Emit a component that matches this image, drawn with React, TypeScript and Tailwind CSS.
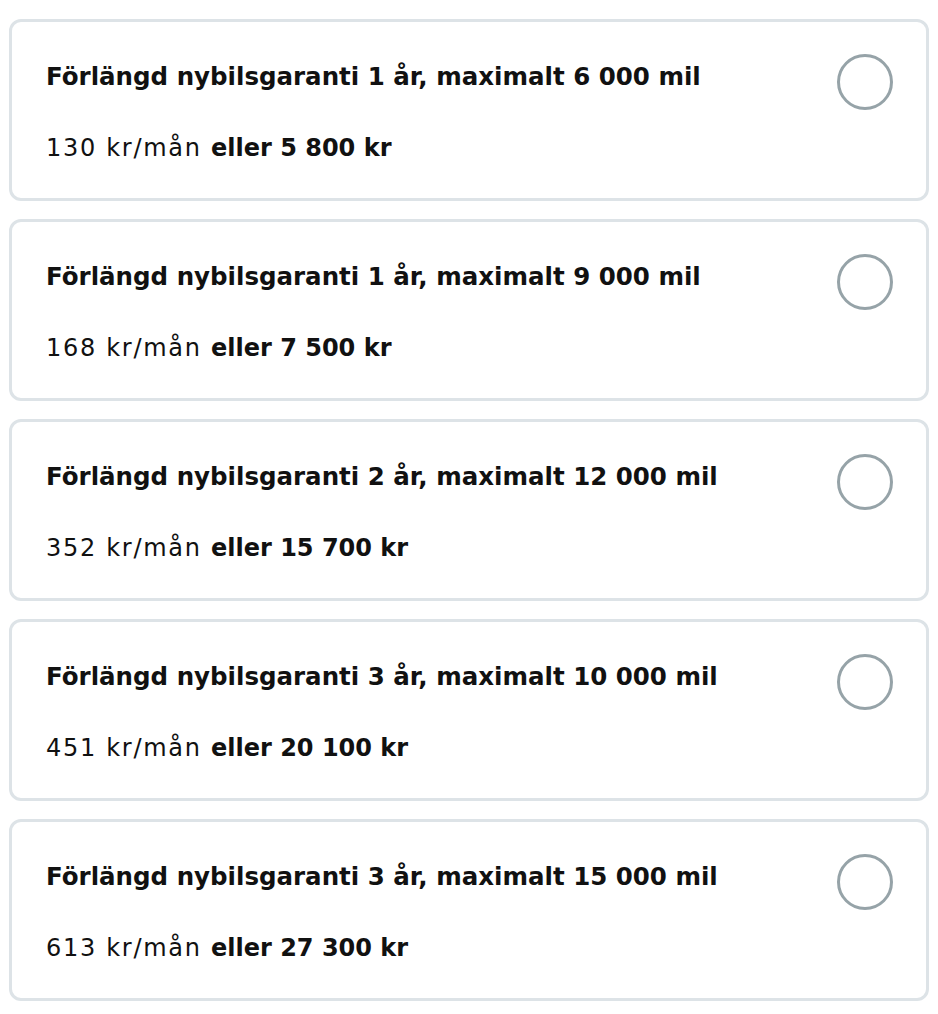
import React, { useState } from 'react';

interface Option {
  id: string;
  years: number;
  mil: string;
  monthly: number;
  total: string;
}

const options: Option[] = [
  { id: 'g1', years: 1, mil: '6 000', monthly: 130, total: '5 800' },
  { id: 'g2', years: 1, mil: '9 000', monthly: 168, total: '7 500' },
  { id: 'g3', years: 2, mil: '12 000', monthly: 352, total: '15 700' },
  { id: 'g4', years: 3, mil: '10 000', monthly: 451, total: '20 100' },
  { id: 'g5', years: 3, mil: '15 000', monthly: 613, total: '27 300' },
];

const App = () => {
  const [selected, setSelected] = useState<string | null>(null);

  return (
    <div
      className="flex flex-col gap-[18px] pt-[19px] px-[9px] pb-[13px] bg-white text-[#111111]"
      style={{ fontFamily: '"DejaVu Sans", sans-serif' }}
    >
      {options.map((opt) => (
        <button
          key={opt.id}
          onClick={() => setSelected(opt.id)}
          className="flex justify-between items-start h-[182px] border-[3px] border-[#dde3e7] rounded-[12px] bg-white text-left pl-[34px] pr-[33px] pt-[32px]"
        >
          <div className="pt-[5px]">
            <p className="text-[24.5px] leading-[36px] font-bold">
              Förlängd nybilsgaranti {opt.years} år, maximalt {opt.mil} mil
            </p>
            <p className="mt-[35px] text-[24px] leading-[36px] tracking-[1.7px]">
              {opt.monthly} kr/mån{' '}
              <span className="font-bold tracking-normal">eller {opt.total} kr</span>
            </p>
          </div>
          <span
            className={`w-[56px] h-[56px] rounded-full border-[3px] shrink-0 flex items-center justify-center ${
              selected === opt.id ? 'border-[#001e50]' : 'border-[#96a3a8]'
            }`}
          >
            {selected === opt.id && <span className="w-[30px] h-[30px] rounded-full bg-[#001e50]" />}
          </span>
        </button>
      ))}
    </div>
  );
};

export default App;
